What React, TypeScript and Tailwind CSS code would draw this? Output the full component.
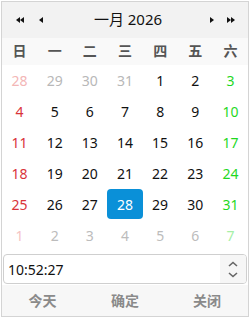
import React from 'react';

type Day = { n: number; c: string };

const font = { fontFamily: '"Noto Sans", "Noto Sans CJK SC", sans-serif' };

const rows: Day[][] = [
  [
    { n: 28, c: 'text-[#f3b6b6]' },
    { n: 29, c: 'text-[#b8b8b8]' },
    { n: 30, c: 'text-[#b8b8b8]' },
    { n: 31, c: 'text-[#b8b8b8]' },
    { n: 1, c: 'text-[#111]' },
    { n: 2, c: 'text-[#111]' },
    { n: 3, c: 'text-[#1fd81f]' },
  ],
  [4, 5, 6, 7, 8, 9, 10].map((n, i) => ({ n, c: i === 0 ? 'text-[#d9343a]' : i === 6 ? 'text-[#1fd81f]' : 'text-[#111]' })),
  [11, 12, 13, 14, 15, 16, 17].map((n, i) => ({ n, c: i === 0 ? 'text-[#d9343a]' : i === 6 ? 'text-[#1fd81f]' : 'text-[#111]' })),
  [18, 19, 20, 21, 22, 23, 24].map((n, i) => ({ n, c: i === 0 ? 'text-[#d9343a]' : i === 6 ? 'text-[#1fd81f]' : 'text-[#111]' })),
  [25, 26, 27, 28, 29, 30, 31].map((n, i) => ({ n, c: i === 0 ? 'text-[#d9343a]' : i === 6 ? 'text-[#1fd81f]' : 'text-[#111]' })),
  [
    { n: 1, c: 'text-[#f5c4c4]' },
    { n: 2, c: 'text-[#bcbcbc]' },
    { n: 3, c: 'text-[#bcbcbc]' },
    { n: 4, c: 'text-[#bcbcbc]' },
    { n: 5, c: 'text-[#bcbcbc]' },
    { n: 6, c: 'text-[#bcbcbc]' },
    { n: 7, c: 'text-[#a6f0a6]' },
  ],
];

const weekdays = ['日', '一', '二', '三', '四', '五', '六'];

function Tri({ dir, double }: { dir: 'l' | 'r'; double?: boolean }) {
  const one = dir === 'l' ? 'M4 0 L0 3 L4 6 Z' : 'M0 0 L4 3 L0 6 Z';
  const two = dir === 'l' ? 'M8 0 L4 3 L8 6 Z' : 'M4 0 L8 3 L4 6 Z';
  return (
    <svg width={double ? 8 : 4} height={6} viewBox={double ? '0 0 8 6' : '0 0 4 6'} className="block shrink-0">
      <path d={one} fill="#111" />
      {double && <path d={two} fill="#111" />}
    </svg>
  );
}

export default function App() {
  return (
    <div className="w-[250px] h-[317px] bg-white" style={font}>
      <div className="ml-[1px] mt-[1px] w-[248px] h-[316px] border border-[#d4d4d4] flex flex-col">
        {/* header */}
        <div className="h-[36px] bg-[#f2f2f2] flex items-center pl-[14px] pr-[13px]">
          <Tri dir="l" double />
          <div className="ml-[15px]"><Tri dir="l" /></div>
          <div className="flex-1 text-center text-[15px] text-[#111] leading-none pb-[1px] pl-[3px]">一月 2026</div>
          <div className="mr-[13px]"><Tri dir="r" /></div>
          <Tri dir="r" double />
        </div>

        {/* weekdays */}
        <div className="h-[27px] bg-[#f9f9f9] grid grid-cols-7 items-center">
          {weekdays.map((w) => (
            <div key={w} className="text-center text-[14px] font-bold text-[#555] pb-[2px]">{w}</div>
          ))}
        </div>

        {/* dates */}
        <div className="flex flex-col">
          {rows.map((r, ri) => (
            <div key={ri} className="grid grid-cols-7 h-[31px]">
              {r.map((d, di) => {
                const sel = ri === 4 && d.n === 28;
                return (
                  <div
                    key={di}
                    className={
                      sel
                        ? 'h-[30px] rounded-[4px] bg-[#0a90d8] text-white flex items-center justify-center text-[14px]'
                        : `h-[30px] flex items-center justify-center text-[14px] ${d.c}`
                    }
                  >
                    {d.n}
                  </div>
                );
              })}
            </div>
          ))}
        </div>

        {/* time */}
        <div className="mt-[3px] mx-[1px] h-[30px] border border-[#cfcfcf] rounded-[4px] flex overflow-hidden">
          <div className="flex-1 flex items-center pl-[4px] text-[14px] text-[#111]">10:52:27</div>
          <div className="w-[26px] bg-[#f6f6f6] flex flex-col items-center justify-center gap-[5px]">
            <svg width="10" height="6" viewBox="0 0 10 6"><path d="M1 5 L5 1.5 L9 5" stroke="#666" strokeWidth="1.6" fill="none" /></svg>
            <svg width="10" height="6" viewBox="0 0 10 6"><path d="M1 1 L5 4.5 L9 1" stroke="#666" strokeWidth="1.6" fill="none" /></svg>
          </div>
        </div>

        {/* footer */}
        <div className="flex-1 mt-[1px] bg-[#f7f7f7] grid grid-cols-3 items-center">
          <div className="text-center text-[14px] font-bold text-[#8a8a8a] pr-[1px]">今天</div>
          <div className="text-center text-[14px] font-bold text-[#8a8a8a]">确定</div>
          <div className="text-center text-[14px] font-bold text-[#8a8a8a]">关闭</div>
        </div>
      </div>
    </div>
  );
}
